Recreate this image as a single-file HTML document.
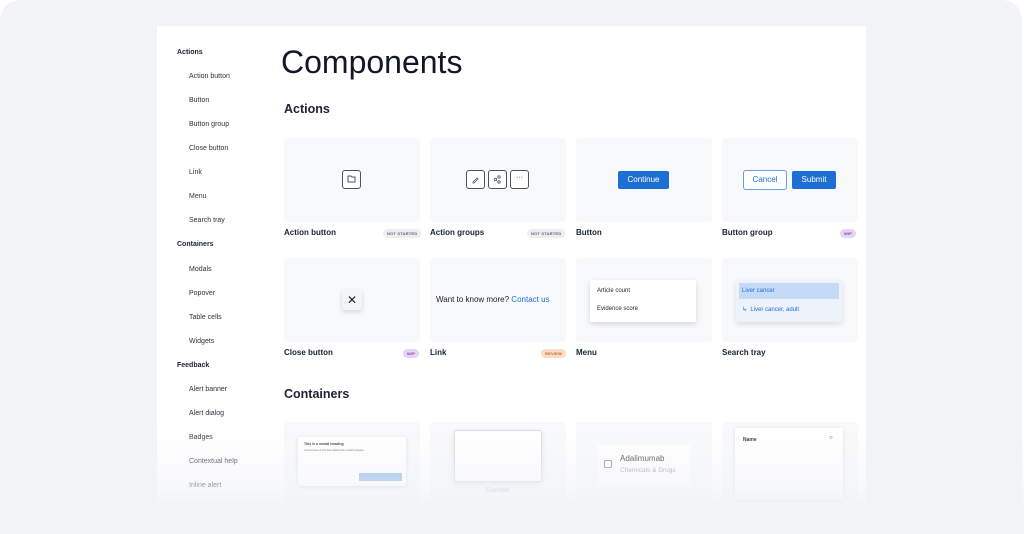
<!DOCTYPE html>
<html><head><style>
*{margin:0;padding:0;box-sizing:border-box}
body{width:1024px;height:534px;background:#fff;font-family:"Liberation Sans",sans-serif;position:relative;overflow:hidden;color:#1a2233}
.frame{position:absolute;left:0;top:0;width:1022px;height:534px;background:#f1f3f6;border-radius:20px}
.panel{position:absolute;left:157px;top:26px;width:709px;height:490px;background:#fff}
.a{position:absolute}
.sh{font-size:7px;font-weight:bold;left:177px}
.si{font-size:7px;left:189px;color:#2a3242}
.card{position:absolute;width:136px;height:84px;background:#f8f9fb;border-radius:4px}
.lbl{position:absolute;font-size:8px;font-weight:bold;color:#1a2233}
.badge{position:absolute;font-size:4px;font-weight:bold;padding:2px 4px;border-radius:6px;letter-spacing:.2px}
.ns{background:#eceef2;color:#667}
.wip{background:#e6d4f7;color:#7a4aa8}
.rev{background:#fcdcc4;color:#b46a30}
.ib{position:absolute;width:19px;height:19px;border:1px solid #4a5262;border-radius:3px;background:#fff}
.fade{position:absolute;left:0;top:425px;width:1024px;height:109px;background:linear-gradient(to bottom,rgba(241,243,246,0) 0%,rgba(241,243,246,.55) 55%,#f1f3f6 78%)}
</style></head><body>
<div class="frame"></div>
<div class="panel"></div>
<div class="a sh" style="top:49px">Actions</div>
<div class="a si" style="top:73px">Action button</div>
<div class="a si" style="top:97px">Button</div>
<div class="a si" style="top:121px">Button group</div>
<div class="a si" style="top:145px">Close button</div>
<div class="a si" style="top:169px">Link</div>
<div class="a si" style="top:193px">Menu</div>
<div class="a si" style="top:217px">Search tray</div>
<div class="a sh" style="top:241px">Containers</div>
<div class="a si" style="top:266px">Modals</div>
<div class="a si" style="top:290px">Popover</div>
<div class="a si" style="top:314px">Table cells</div>
<div class="a si" style="top:338px">Widgets</div>
<div class="a sh" style="top:362px">Feedback</div>
<div class="a si" style="top:386px">Alert banner</div>
<div class="a si" style="top:410px">Alert dialog</div>
<div class="a si" style="top:434px">Badges</div>
<div class="a si" style="top:458px">Contextual help</div>
<div class="a si" style="top:482px">Inline alert</div>

<div class="a" style="left:281px;top:44px;font-size:32px;color:#101828">Components</div>
<div class="a" style="left:284px;top:102px;font-size:12.5px;font-weight:bold">Actions</div>

<div class="card" style="left:284px;top:138px"></div>
<div class="ib" style="left:342px;top:170px"><svg width="17" height="17" viewBox="0 0 17 17"><path d="M5 5h3l1 1h3v5H5z" fill="none" stroke="#4a5262" stroke-width="1"/></svg></div>
<div class="lbl" style="left:284px;top:228px">Action button</div><div class="badge ns" style="left:383px;top:229px">NOT STARTED</div>

<div class="card" style="left:430px;top:138px"></div>
<div class="ib" style="left:466px;top:170px"><svg width="17" height="17" viewBox="0 0 17 17"><path d="M6 11l4-4 1 1-4 4H6z" fill="none" stroke="#4a5262" stroke-width=".8"/></svg></div>
<div class="ib" style="left:488px;top:170px"><svg width="17" height="17" viewBox="0 0 17 17"><circle cx="10" cy="6" r="1.2" fill="none" stroke="#4a5262" stroke-width=".8"/><circle cx="6.5" cy="8.5" r="1.2" fill="none" stroke="#4a5262" stroke-width=".8"/><circle cx="10" cy="11" r="1.2" fill="none" stroke="#4a5262" stroke-width=".8"/></svg></div>
<div class="ib" style="left:510px;top:170px;font-size:7px;text-align:center;line-height:14px">···</div>
<div class="lbl" style="left:430px;top:228px">Action groups</div><div class="badge ns" style="left:527px;top:229px">NOT STARTED</div>

<div class="card" style="left:576px;top:138px"></div>
<div class="a" style="left:618px;top:171px;width:51px;height:18px;background:#1d6fd6;border-radius:2px;color:#fff;font-size:8px;text-align:center;line-height:18px">Continue</div>
<div class="lbl" style="left:576px;top:228px">Button</div>

<div class="card" style="left:722px;top:138px"></div>
<div class="a" style="left:743px;top:170px;width:44px;height:20px;background:#fff;border:1px solid #6a9de0;border-radius:3px;color:#1d6fd6;font-size:8px;text-align:center;line-height:18px">Cancel</div>
<div class="a" style="left:792px;top:171px;width:44px;height:18px;background:#1d6fd6;border-radius:2px;color:#fff;font-size:8px;text-align:center;line-height:18px">Submit</div>
<div class="lbl" style="left:722px;top:228px">Button group</div><div class="badge wip" style="left:840px;top:229px">WIP</div>

<div class="card" style="left:284px;top:258px"></div>
<div class="a" style="left:342px;top:290px;width:20px;height:20px;background:#f4f5f7;border-radius:3px;box-shadow:0 2px 5px rgba(0,0,0,.15);text-align:center;line-height:20px;font-size:12px;color:#222">✕</div>
<div class="lbl" style="left:284px;top:348px">Close button</div><div class="badge wip" style="left:403px;top:349px">WIP</div>

<div class="card" style="left:430px;top:258px"></div>
<div class="a" style="left:436px;top:295px;font-size:8px;color:#222">Want to know more? <span style="color:#1d6fd6">Contact us</span></div>
<div class="lbl" style="left:430px;top:348px">Link</div><div class="badge rev" style="left:541px;top:349px">REVIEW</div>

<div class="card" style="left:576px;top:258px"></div>
<div class="a" style="left:590px;top:280px;width:106px;height:42px;background:#fff;box-shadow:0 2px 6px rgba(0,0,0,.15);border-radius:2px"></div>
<div class="a" style="left:597px;top:288px;font-size:6px">Article count</div>
<div class="a" style="left:597px;top:306px;font-size:6px">Evidence score</div>
<div class="lbl" style="left:576px;top:348px">Menu</div>

<div class="card" style="left:722px;top:258px"></div>
<div class="a" style="left:736px;top:280px;width:106px;height:42px;background:#eef3fb;box-shadow:0 2px 6px rgba(0,0,0,.12);border-radius:2px"></div>
<div class="a" style="left:739px;top:283px;width:100px;height:16px;background:#c4daf6"></div>
<div class="a" style="left:742px;top:288px;font-size:6px;color:#1d6fd6">Liver cancer</div>
<div class="a" style="left:742px;top:306px;font-size:6px;color:#1d6fd6">↳&nbsp; Liver cancer, adult</div>
<div class="lbl" style="left:722px;top:348px">Search tray</div>

<div class="a" style="left:284px;top:387px;font-size:12.5px;font-weight:bold">Containers</div>

<div class="card" style="left:284px;top:422px"></div>
<div class="a" style="left:298px;top:437px;width:108px;height:49px;background:#fff;box-shadow:0 1px 4px rgba(0,0,0,.15)"></div>
<div class="a" style="left:304px;top:442px;font-size:3.5px;font-weight:bold">This is a modal heading</div>
<div class="a" style="left:304px;top:449px;font-size:2.5px;color:#555">A short piece of text that explains the modal's purpose</div>
<div class="a" style="left:359px;top:473px;width:43px;height:8px;background:#8fb5e8"></div>

<div class="card" style="left:430px;top:422px"></div>
<div class="a" style="left:454px;top:430px;width:88px;height:52px;background:#fff;border:1px solid #d8dce4;border-radius:3px;box-shadow:0 2px 6px rgba(0,0,0,.1)"></div>
<div class="a" style="left:486px;top:488px;font-size:6px;color:#9fb5d8">Example</div>

<div class="card" style="left:576px;top:422px"></div>
<div class="a" style="left:598px;top:445px;width:92px;height:40px;background:#fff"></div>
<div class="a" style="left:604px;top:460px;width:8px;height:8px;border:1px solid #888;border-radius:1px"></div>
<div class="a" style="left:620px;top:454px;font-size:8px;color:#333">Adalimumab</div>
<div class="a" style="left:620px;top:467px;font-size:6.5px;color:#999">Chemicals &amp; Drugs</div>

<div class="card" style="left:722px;top:422px"></div>
<div class="a" style="left:735px;top:428px;width:108px;height:72px;background:#fff;box-shadow:0 1px 4px rgba(0,0,0,.12)"></div>
<div class="a" style="left:743px;top:437px;font-size:5px;font-weight:bold">Name</div>
<div class="a" style="left:829px;top:435px;font-size:6px">○</div>

<div class="fade"></div>
</body></html>
